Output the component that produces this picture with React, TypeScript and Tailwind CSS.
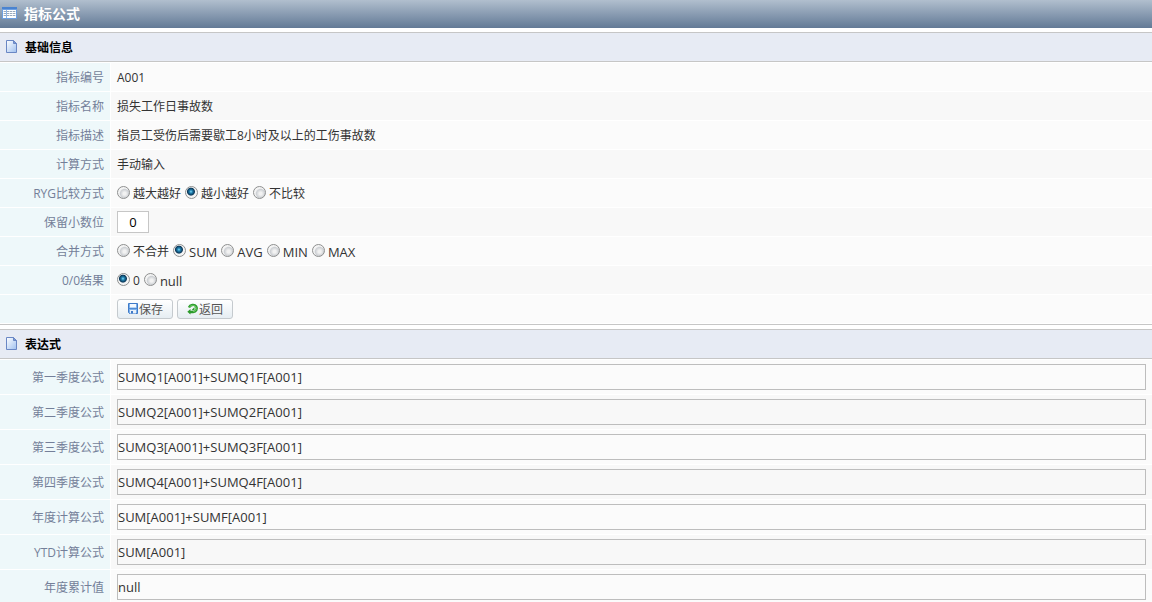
import React, { useState } from 'react';

interface RowProps {
  label?: string;
  htmlFor?: string;
  tall?: boolean;
  shade?: boolean;
  children: React.ReactNode;
}

interface RadioGroupProps {
  name: string;
  label: string;
  options: string[];
  value: string;
  onChange: (value: string) => void;
}

const details = [
  { label: '指标编号', value: 'A001' },
  { label: '指标名称', value: '损失工作日事故数' },
  { label: '指标描述', value: '指员工受伤后需要歇工8小时及以上的工伤事故数' },
  { label: '计算方式', value: '手动输入' },
];

const formulas = [
  { id: 'q1', label: '第一季度公式', value: 'SUMQ1[A001]+SUMQ1F[A001]' },
  { id: 'q2', label: '第二季度公式', value: 'SUMQ2[A001]+SUMQ2F[A001]' },
  { id: 'q3', label: '第三季度公式', value: 'SUMQ3[A001]+SUMQ3F[A001]' },
  { id: 'q4', label: '第四季度公式', value: 'SUMQ4[A001]+SUMQ4F[A001]' },
  { id: 'year', label: '年度计算公式', value: 'SUM[A001]+SUMF[A001]' },
  { id: 'ytd', label: 'YTD计算公式', value: 'SUM[A001]' },
  { id: 'total', label: '年度累计值', value: 'null' },
];

const TableIcon = () => (
  <svg className="mb-0.5" width="16" height="14" viewBox="0 0 16 14" shapeRendering="crispEdges" aria-hidden="true">
    <rect x="0" y="1" width="15" height="12" fill="#6d9fe0" />
    <rect x="0" y="1" width="15" height="2" fill="#4a83d0" />
    <rect x="1" y="4" width="13" height="8" fill="#fff" />
    <path d="M1 5h13v1H1zM1 7h13v1H1zM1 9h13v1H1z" fill="#d3dde9" />
    <path d="M2 5h2v1H2zM5 5h2v1H5zM8 5h2v1H8zM11 5h2v1h-2zM2 7h2v1H2zM5 7h2v1H5zM8 7h2v1H8zM11 7h2v1h-2zM2 9h2v1H2zM5 9h2v1H5zM8 9h2v1H8zM11 9h2v1h-2z" fill="#9aa9bb" />
    <path d="M4 4h1v8H4z" fill="#8db6ea" />
  </svg>
);

const PageIcon = () => (
  <svg width="12" height="14" viewBox="0 0 12 14" aria-hidden="true">
    <defs>
      <linearGradient id="page" x1="0" y1="0" x2="1" y2="1">
        <stop offset="0" stopColor="#ffffff" />
        <stop offset="1" stopColor="#9fc0ef" />
      </linearGradient>
    </defs>
    <path d="M.5.5h7l3 3v9H.5z" fill="url(#page)" stroke="#6a87c4" />
    <path d="M7.5.5v3h3z" fill="#7b9ad4" stroke="#6a87c4" />
  </svg>
);

const SaveIcon = () => (
  <svg width="12" height="12" viewBox="0 0 12 12" aria-hidden="true">
    <path d="M1.500.5h9v10h-8l-1-1z" fill="#7db0ea" stroke="#3f7ac8" />
    <path d="M3 1h6v3.500H3z" fill="#f4f9ff" />
    <path d="M1.500 5.500h9" stroke="#4f8ad4" />
    <path d="M3 7h6v3.500H3z" fill="#e8f1fb" />
    <path d="M4 8h2v2.500H4z" fill="#3f7ac8" />
  </svg>
);

const BackIcon = () => (
  <svg width="12" height="12" viewBox="0 0 12 12" fill="none" aria-hidden="true">
    <path d="M2 4.500C3 1.500 7.500 1 9.200 3.500c1.600 2.500-.2 5.500-3 5.500H2" stroke="#2c9a2c" strokeWidth="2.400" />
    <path d="M2.500 4.200C3.500 2 7.300 1.600 8.800 3.800c1.200 2.200-.2 4.800-2.600 4.800" stroke="#6fd163" />
    <path d="M7.500 4v3.200H4.500z" fill="#2c9a2c" />
    <path d="M3.500 6v5.500L.3 8.800z" fill="#2c9a2c" />
  </svg>
);

const SectionTitle = ({ children }: { children: React.ReactNode }) => (
  <h2 className="flex h-[30px] items-center gap-[7px] border-y border-[#c6c6c6] bg-[#e7ebf4] px-1.5 text-xs font-bold text-black">
    <PageIcon />
    <span className="pt-0.5">{children}</span>
  </h2>
);

const Row = ({ label, htmlFor, tall, shade, children }: RowProps) => (
  <div className={`grid grid-cols-[110px_1fr] gap-px ${tall ? 'h-[34px]' : 'h-7'}`}>
    <div className="flex items-center justify-end bg-[#eef8fa] pt-0.5 pr-1.5 text-[#747f99]">
      {htmlFor ? <label htmlFor={htmlFor}>{label}</label> : label}
    </div>
    <div className={`flex items-center px-1.5 ${shade ? 'bg-[#f8f8f8]' : 'bg-[#fbfbfb]'}`}>{children}</div>
  </div>
);

const RadioGroup = ({ name, label, options, value, onChange }: RadioGroupProps) => (
  <div role="radiogroup" aria-label={label} className="flex gap-1">
    {options.map(option => (
      <label key={option} className="flex items-center gap-[3px]">
        <input
          type="radio"
          name={name}
          checked={option === value}
          onChange={() => onChange(option)}
          className="mb-0.5 size-[13px] appearance-none rounded-full border border-[#8e8f8f] bg-[radial-gradient(circle_at_60%_60%,#f2f2f2_0_15%,#cdd0d4_45%,#f4f4f4_58%)] checked:bg-[radial-gradient(circle_at_45%_42%,#8adcf8_0,#2386b5_16%,#0b3657_40%,#f4f4f4_50%)]"
        />
        {/* Latin option names are set one size up from the Chinese ones */}
        <span className={`pt-0.5 leading-4 ${/^[A-Za-z]/.test(option) ? 'text-[13px]' : 'text-xs'}`}>{option}</span>
      </label>
    ))}
  </div>
);

const buttonClass =
  'flex h-5 items-center rounded-[3px] border border-[#c5cace] bg-linear-to-b from-white to-[#e6edf2] px-[9px] text-[#555]';

export default function App() {
  const [compare, setCompare] = useState('越小越好');
  const [merge, setMerge] = useState('SUM');
  const [zero, setZero] = useState('0');
  const [digits, setDigits] = useState('0');

  return (
    <main className="h-screen overflow-hidden bg-white font-['Open_Sans','Noto_Sans_CJK_SC',sans-serif] text-xs text-[#333]">
      <header className="flex h-7 items-center gap-1.5 bg-linear-to-b from-[#b1bfce] to-[#637a96] pl-0.5 text-white">
        <TableIcon />
        <h1 className="text-sm font-bold">指标公式</h1>
      </header>

      <section className="mt-1 border-b border-[#c6c6c6]">
        <SectionTitle>基础信息</SectionTitle>
        <div className="grid gap-px py-px">
          {details.map((item, i) => (
            <Row key={item.label} label={item.label} shade={i % 2 === 1}>
              <span className="pt-0.5">{item.value}</span>
            </Row>
          ))}
          <Row label="RYG比较方式">
            <RadioGroup
              name="compare"
              label="RYG比较方式"
              options={['越大越好', '越小越好', '不比较']}
              value={compare}
              onChange={setCompare}
            />
          </Row>
          <Row label="保留小数位" htmlFor="digits" shade>
            <input
              id="digits"
              value={digits}
              onChange={e => setDigits(e.target.value)}
              className="h-[22px] w-8 border border-[#c6c6c6] bg-white text-center text-[13px] text-black"
            />
          </Row>
          <Row label="合并方式">
            <RadioGroup
              name="merge"
              label="合并方式"
              options={['不合并', 'SUM', 'AVG', 'MIN', 'MAX']}
              value={merge}
              onChange={setMerge}
            />
          </Row>
          <Row label="0/0结果" shade>
            <RadioGroup name="zero" label="0/0结果" options={['0', 'null']} value={zero} onChange={setZero} />
          </Row>
          <Row>
            <div className="flex gap-1">
              <button type="button" className={buttonClass}>
                <SaveIcon />
                <span className="pt-0.5">保存</span>
              </button>
              <button type="button" className={buttonClass}>
                <BackIcon />
                <span className="pt-0.5">返回</span>
              </button>
            </div>
          </Row>
        </div>
      </section>

      <section className="mt-1">
        <SectionTitle>表达式</SectionTitle>
        <div className="grid gap-px pt-px">
          {formulas.map((item, i) => (
            <Row key={item.id} label={item.label} htmlFor={item.id} shade={i % 2 === 1} tall>
              <input
                id={item.id}
                defaultValue={item.value}
                readOnly
                className="h-[26px] w-full border border-[#bdbdbd] text-[13px]"
              />
            </Row>
          ))}
        </div>
      </section>
    </main>
  );
}
